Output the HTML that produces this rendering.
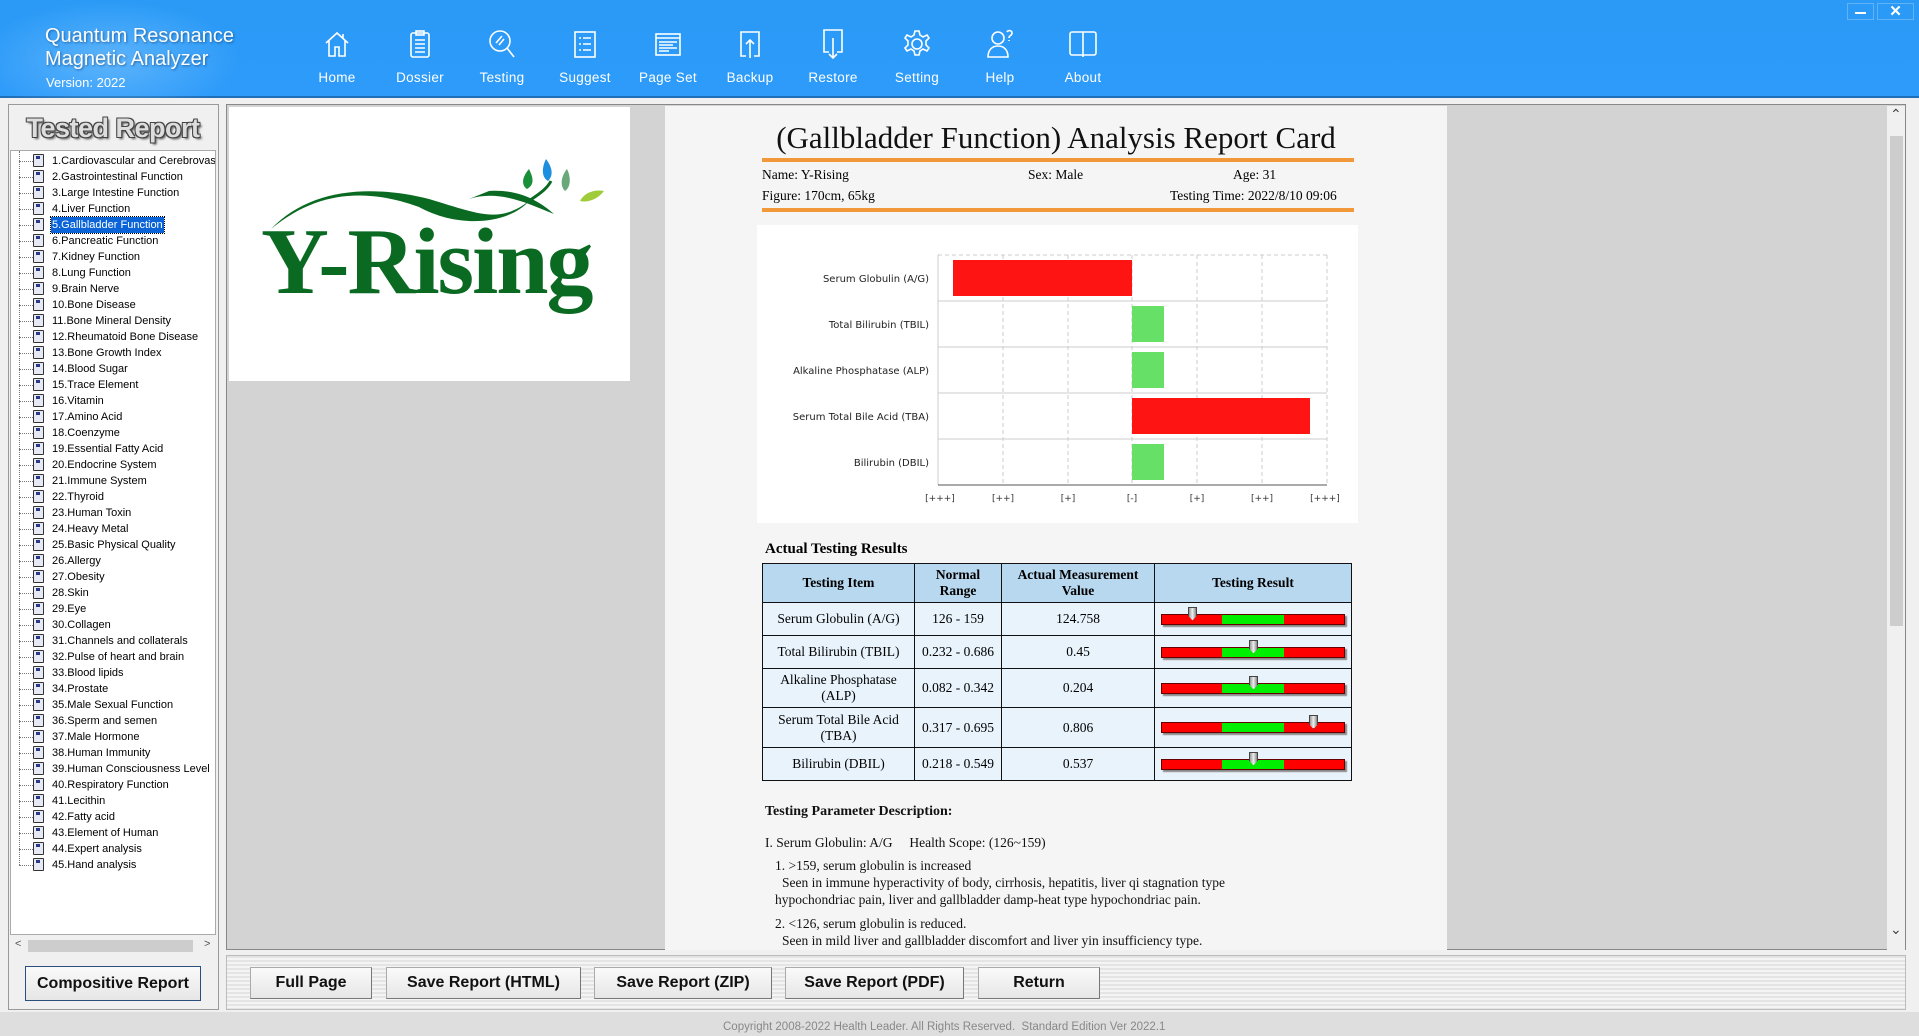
<!DOCTYPE html>
<html><head><meta charset="utf-8">
<style>
*{margin:0;padding:0;box-sizing:border-box}
body{width:1919px;height:1036px;overflow:hidden;background:#f0f0f0;font-family:"Liberation Sans",sans-serif;position:relative}
.abs{position:absolute}
#hdr{left:0;top:0;width:1919px;height:98px;background:linear-gradient(#2a9af6,#2e9bfa);border-bottom:2px solid #1f6fb8}
.nav{position:absolute;top:28px;width:80px;text-align:center;color:#fff;font-size:13.5px;letter-spacing:.3px}
.nav svg{display:block;margin:0 auto 10px;width:32px;height:32px}
.tree{left:10px;top:150px;width:206px;height:785px;background:#fff;border:1px solid #aaa;overflow:hidden}
.it{position:absolute;left:0;height:16px;font-size:11px;line-height:16px;color:#000;white-space:nowrap}
.it i{position:absolute;left:8px;top:8px;width:14px;border-top:1px dotted #777}
.it b{position:absolute;left:22px;top:1px;width:11px;height:13px;background:#e6e8f4;border:1px solid #333;border-radius:1px}
.it b:after{content:"";position:absolute;left:2px;top:1px;width:4px;height:3px;background:#2a3a8a}
.it span{position:absolute;left:40px;top:0;padding:0 1px}
.btn{position:absolute;top:967px;height:32px;background:linear-gradient(#fafafa,#e6e6e6);border:1px solid #aaa;border-bottom-color:#777;border-right-color:#777;font-weight:bold;font-size:16px;text-align:center;line-height:30px;color:#111}
.serif{font-family:"Liberation Serif",serif}
table{border-collapse:collapse;position:absolute;left:762px;top:563px;font-family:"Liberation Serif",serif;font-size:13.5px}
td,th{border:1px solid #111;text-align:center;background:#e9f3fb;line-height:16px}
th{background:#b7d8ef;font-weight:bold}
.g{position:relative;width:184px;height:11px;margin:0 auto;background:linear-gradient(90deg,#f00 0,#f00 33%,#0e0 33%,#0e0 67%,#f00 67%);border:1px solid #600;box-shadow:2px 2px 1px #888}
.mk{position:absolute;top:-8px;width:9px;height:14px;background:linear-gradient(90deg,#999,#eee,#888);border:1px solid #444;clip-path:polygon(0 0,100% 0,100% 65%,50% 100%,0 65%)}
.desc{position:absolute;left:765px;font-family:"Liberation Serif",serif;font-size:13.5px;color:#111;white-space:nowrap}
</style></head><body>
<div id="hdr" class="abs">
 <div class="abs" style="left:0;top:0;width:240px;height:98px;background:radial-gradient(ellipse at 110px 60px,rgba(150,210,255,.45),rgba(40,150,245,0) 70%)"></div>
 <div class="abs" style="left:45px;top:25px;color:#fff;font-size:20px;line-height:23px;text-shadow:1px 1px 2px rgba(0,40,90,.5)">Quantum Resonance<br>Magnetic Analyzer</div>
 <div class="abs" style="left:46px;top:75px;color:#fff;font-size:13px">Version: 2022</div>
 <div class="nav" style="left:297px"><svg viewBox="0 0 32 32" fill="none" stroke="#fff" stroke-width="1.6"><path d="M5 15L16 5l11 10M8 13v15h6v-9h4v9h6V13M22 6v4"/></svg>Home</div>
 <div class="nav" style="left:380px"><svg viewBox="0 0 32 32" fill="none" stroke="#fff" stroke-width="1.6"><rect x="7" y="5" width="18" height="24" rx="2"/><rect x="12" y="3" width="8" height="4"/><path d="M11 12h10M11 16h10M11 20h10M11 24h10"/></svg>Dossier</div>
 <div class="nav" style="left:462px"><svg viewBox="0 0 32 32" fill="none" stroke="#fff" stroke-width="1.6"><circle cx="14" cy="13" r="10"/><path d="M21 20l7 9M10 15l6-7M13 17l5-6"/></svg>Testing</div>
 <div class="nav" style="left:545px"><svg viewBox="0 0 32 32" fill="none" stroke="#fff" stroke-width="1.6"><rect x="6" y="4" width="20" height="25"/><path d="M10 10h2M14 10h8M10 16h2M14 16h8M10 22h2M14 22h8"/></svg>Suggest</div>
 <div class="nav" style="left:628px"><svg viewBox="0 0 32 32" fill="none" stroke="#fff" stroke-width="1.6"><rect x="4" y="6" width="24" height="21"/><path d="M4 10h24M7 14h18M7 17h14M7 20h18M7 23h10"/></svg>Page Set</div>
 <div class="nav" style="left:710px"><svg viewBox="0 0 32 32" fill="none" stroke="#fff" stroke-width="1.6"><path d="M12 28H7V4h18v24h-5M16 12v18M12 16l4-4 4 4"/></svg>Backup</div>
 <div class="nav" style="left:793px"><svg viewBox="0 0 32 32" fill="none" stroke="#fff" stroke-width="1.6"><path d="M12 24H7V2h18v22h-5M16 10v20M12 26l4 4 4-4"/></svg>Restore</div>
 <div class="nav" style="left:877px"><svg viewBox="0 0 32 32" fill="none" stroke="#fff" stroke-width="1.6"><circle cx="16" cy="16" r="5"/><path d="M14 3h4l1 4 3 2 4-2 2 3-3 3v4l3 3-2 3-4-2-3 2-1 4h-4l-1-4-3-2-4 2-2-3 3-3v-4L4 10l2-3 4 2 3-2z"/></svg>Setting</div>
 <div class="nav" style="left:960px"><svg viewBox="0 0 32 32" fill="none" stroke="#fff" stroke-width="1.6"><circle cx="14" cy="10" r="6"/><path d="M4 29c0-7 4-11 10-11s10 4 10 11zM23 4c1-2 5-2 5 1s-3 2-3 5M25 12v1"/></svg>Help</div>
 <div class="nav" style="left:1043px"><svg viewBox="0 0 32 32" fill="none" stroke="#fff" stroke-width="1.6"><rect x="3" y="4" width="26" height="23" rx="2"/><path d="M16 4v25"/></svg>About</div>
 <div class="abs" style="left:1847px;top:3px;width:27px;height:17px;border:1px solid rgba(255,255,255,.25)"><div class="abs" style="left:7px;top:8px;width:11px;height:2px;background:#fff"></div></div>
 <div class="abs" style="left:1877px;top:3px;width:37px;height:17px;border:1px solid rgba(255,255,255,.25);color:#fff;font-size:15px;text-align:center;line-height:15px;font-weight:bold">✕</div>
</div>

<!-- left panel -->
<div class="abs" style="left:8px;top:104px;width:211px;height:906px;border:1px solid #999;background:#f0f0f0"></div>
<div class="abs" style="left:10px;top:106px;width:206px;height:44px;text-align:center;font-size:27px;font-weight:bold;color:#ddd;line-height:44px;letter-spacing:-.5px;text-shadow:-1px -1px 0 #444,1px -1px 0 #444,-1px 1px 0 #444,1px 1px 0 #444,2px 2px 2px #555">Tested Report</div>
<div class="abs tree" id="tree">
<div class="abs" style="left:8px;top:0;height:714px;border-left:1px dotted #777"></div>
</div>
<div class="abs" style="left:11px;top:938px;width:204px;height:16px;background:#f0f0f0"><div class="abs" style="left:17px;top:2px;width:165px;height:12px;background:#cdcdcd"></div><span class="abs" style="left:4px;top:0;font-size:11px;color:#555">&lt;</span><span class="abs" style="left:193px;top:0;font-size:11px;color:#555">&gt;</span></div>
<div class="btn" style="left:25px;top:966px;width:176px;height:35px;line-height:33px;border:1px solid #2b4f7c;font-size:16px">Compositive Report</div>

<!-- middle gray area -->
<div class="abs" style="left:226px;top:104px;width:1680px;height:846px;border:1px solid #888;background:#d3d3d3"></div>
<div class="abs" style="left:229px;top:107px;width:401px;height:274px;background:#fff"></div>
<svg class="abs" style="left:229px;top:107px" width="401" height="274" viewBox="0 0 401 274">
 <g transform="translate(0,22)">
 <path d="M42 100 C80 60,140 55,200 70 C250 85,270 95,300 72 C280 95,230 100,190 78 C140 60,90 60,42 100Z" fill="#0a6a22"/>
 <path d="M240 70 C270 60,300 75,325 85 C310 72,290 60,260 62Z" fill="#0a6a22"/>
 <path d="M300 72 C310 65,318 60,322 52" stroke="#0a6a22" stroke-width="3" fill="none"/>
 <path d="M300 40 c5 10 5 16 -2 20 c-6 -4 -5 -12 2 -20z" fill="#1a8f3a"/>
 <path d="M317 30 c6 8 8 16 2 22 c-7 -4 -6 -14 -2 -22z" fill="#1d8fde"/>
 <path d="M338 40 c4 8 4 18 -2 22 c-6 -6 -3 -16 2 -22z" fill="#6aa87a"/>
 <path d="M375 62 c-6 8 -16 12 -24 10 c4 -8 14 -12 24 -10z" fill="#9fcc3a"/>
 </g>
 <text x="32" y="186" font-family="Liberation Serif,serif" font-size="94" font-weight="bold" fill="#0a6a22" letter-spacing="-2">Y-Rising</text>
</svg>
<div class="abs" style="left:665px;top:106px;width:782px;height:844px;background:#f5f5f5"></div>
<div class="abs" style="left:1887px;top:106px;width:18px;height:844px;background:#f0f0f0"><div class="abs" style="left:3px;top:30px;width:13px;height:490px;background:#cdcdcd"></div><span class="abs" style="left:3px;top:0;font-size:14px;color:#444">&#8963;</span><span class="abs" style="left:3px;top:815px;font-size:14px;color:#444">&#8964;</span></div>

<!-- report -->
<div class="abs serif" style="left:665px;top:120px;width:782px;text-align:center;font-size:31px;color:#111">(Gallbladder Function) Analysis Report Card</div>
<div class="abs" style="left:762px;top:158px;width:592px;height:4px;background:#f0983a"></div>
<div class="abs serif" style="left:762px;top:167px;font-size:13.5px">Name: Y-Rising</div>
<div class="abs serif" style="left:1028px;top:167px;font-size:13.5px">Sex: Male</div>
<div class="abs serif" style="left:1233px;top:167px;font-size:13.5px">Age: 31</div>
<div class="abs serif" style="left:762px;top:188px;font-size:13.5px">Figure: 170cm, 65kg</div>
<div class="abs serif" style="left:1170px;top:188px;font-size:13.5px">Testing Time: 2022/8/10 09:06</div>
<div class="abs" style="left:762px;top:208px;width:592px;height:4px;background:#f0983a"></div>

<svg class="abs" style="left:757px;top:225px" width="601" height="298" viewBox="0 0 601 298">
 <rect width="601" height="298" fill="#fff"/>
 <g stroke="#ccc" stroke-dasharray="4 3">
  <line x1="246" y1="30" x2="246" y2="260"/><line x1="311" y1="30" x2="311" y2="260"/><line x1="375" y1="30" x2="375" y2="260"/><line x1="440" y1="30" x2="440" y2="260"/><line x1="505" y1="30" x2="505" y2="260"/><line x1="570" y1="30" x2="570" y2="260"/><line x1="181" y1="30" x2="570" y2="30"/>
 </g>
 <g stroke="#ccc"><line x1="181" y1="76" x2="570" y2="76"/><line x1="181" y1="122" x2="570" y2="122"/><line x1="181" y1="168" x2="570" y2="168"/><line x1="181" y1="214" x2="570" y2="214"/></g>
 <line x1="181" y1="30" x2="181" y2="260" stroke="#ccc"/>
 <line x1="181" y1="260" x2="570" y2="260" stroke="#555"/>
 <rect x="196" y="35" width="179" height="36" fill="#ff1414"/>
 <rect x="375" y="81" width="32" height="36" fill="#66e066"/>
 <rect x="375" y="127" width="32" height="36" fill="#66e066"/>
 <rect x="375" y="173" width="178" height="36" fill="#ff1414"/>
 <rect x="375" y="219" width="32" height="36" fill="#66e066"/>
 <g font-family="DejaVu Sans,sans-serif" font-size="10" text-anchor="end" fill="#222">
  <text x="172" y="57">Serum Globulin (A/G)</text><text x="172" y="103">Total Bilirubin (TBIL)</text><text x="172" y="149">Alkaline Phosphatase (ALP)</text><text x="172" y="195">Serum Total Bile Acid (TBA)</text><text x="172" y="241">Bilirubin (DBIL)</text>
 </g>
 <g font-family="DejaVu Sans,sans-serif" font-size="9" text-anchor="middle" fill="#333">
  <text x="183" y="276">[+++]</text><text x="246" y="276">[++]</text><text x="311" y="276">[+]</text><text x="375" y="276">[-]</text><text x="440" y="276">[+]</text><text x="505" y="276">[++]</text><text x="568" y="276">[+++]</text>
 </g>
</svg>

<div class="abs serif" style="left:765px;top:541px;font-size:15px;font-weight:bold">Actual Testing Results</div>
<table>
<tr style="height:39px"><th style="width:152px">Testing Item</th><th style="width:87px">Normal<br>Range</th><th style="width:153px">Actual Measurement<br>Value</th><th style="width:197px">Testing Result</th></tr>
<tr style="height:33px"><td>Serum Globulin (A/G)</td><td>126 - 159</td><td>124.758</td><td><div class="g"><div class="mk" style="left:26px"></div></div></td></tr>
<tr style="height:33px"><td>Total Bilirubin (TBIL)</td><td>0.232 - 0.686</td><td>0.45</td><td><div class="g"><div class="mk" style="left:87px"></div></div></td></tr>
<tr style="height:39px"><td>Alkaline Phosphatase<br>(ALP)</td><td>0.082 - 0.342</td><td>0.204</td><td><div class="g"><div class="mk" style="left:87px"></div></div></td></tr>
<tr style="height:40px"><td>Serum Total Bile Acid<br>(TBA)</td><td>0.317 - 0.695</td><td>0.806</td><td><div class="g"><div class="mk" style="left:147px"></div></div></td></tr>
<tr style="height:33px"><td>Bilirubin (DBIL)</td><td>0.218 - 0.549</td><td>0.537</td><td><div class="g"><div class="mk" style="left:87px"></div></div></td></tr>
</table>

<div class="desc" style="top:804px;font-weight:bold;font-size:14px">Testing Parameter Description:</div>
<div class="desc" style="top:835px">I. Serum Globulin: A/G &nbsp;&nbsp;&nbsp;&nbsp;Health Scope: (126~159)</div>
<div class="desc" style="top:858px;left:775px">1. &gt;159, serum globulin is increased</div>
<div class="desc" style="top:875px;left:782px">Seen in immune hyperactivity of body, cirrhosis, hepatitis, liver qi stagnation type</div>
<div class="desc" style="top:892px;left:775px">hypochondriac pain, liver and gallbladder damp-heat type hypochondriac pain.</div>
<div class="desc" style="top:916px;left:775px">2. &lt;126, serum globulin is reduced.</div>
<div class="desc" style="top:933px;left:782px">Seen in mild liver and gallbladder discomfort and liver yin insufficiency type.</div>

<!-- button bar -->
<div class="abs" style="left:226px;top:955px;width:1680px;height:55px;border:1px solid #bbb;background:repeating-linear-gradient(#e4e4e4 0,#e4e4e4 2px,#f4f4f4 2px,#f4f4f4 4px)"></div>
<div class="btn" style="left:250px;width:122px">Full Page</div>
<div class="btn" style="left:386px;width:195px">Save Report (HTML)</div>
<div class="btn" style="left:594px;width:178px">Save Report (ZIP)</div>
<div class="btn" style="left:785px;width:179px">Save Report (PDF)</div>
<div class="btn" style="left:978px;width:122px">Return</div>

<div class="abs" style="left:0;top:1012px;width:1919px;height:24px;background:#dedede"></div>
<div class="abs" style="left:723px;top:1021px;font-size:11.5px;color:#888">Copyright 2008-2022 Health Leader. All Rights Reserved.&nbsp; Standard Edition Ver 2022.1</div>

<script>
var n=["Cardiovascular and Cerebrovascular","Gastrointestinal Function","Large Intestine Function","Liver Function","Gallbladder Function","Pancreatic Function","Kidney Function","Lung Function","Brain Nerve","Bone Disease","Bone Mineral Density","Rheumatoid Bone Disease","Bone Growth Index","Blood Sugar","Trace Element","Vitamin","Amino Acid","Coenzyme","Essential Fatty Acid","Endocrine System","Immune System","Thyroid","Human Toxin","Heavy Metal","Basic Physical Quality","Allergy","Obesity","Skin","Eye","Collagen","Channels and collaterals","Pulse of heart and brain","Blood lipids","Prostate","Male Sexual Function","Sperm and semen","Male Hormone","Human Immunity","Human Consciousness Level","Respiratory Function","Lecithin","Fatty acid","Element of Human","Expert analysis","Hand analysis"];
var t=document.getElementById('tree'),h='';
for(var i=0;i<n.length;i++){var s=i==4?' style="background:#0a64d8;color:#fff;outline:1px dotted #000"':'';h+='<div class="it" style="top:'+(2+i*16)+'px"><i></i><b></b><span'+s+'>'+(i+1)+'.'+n[i]+'</span></div>';}
t.innerHTML+=h;
</script>
</body></html>
